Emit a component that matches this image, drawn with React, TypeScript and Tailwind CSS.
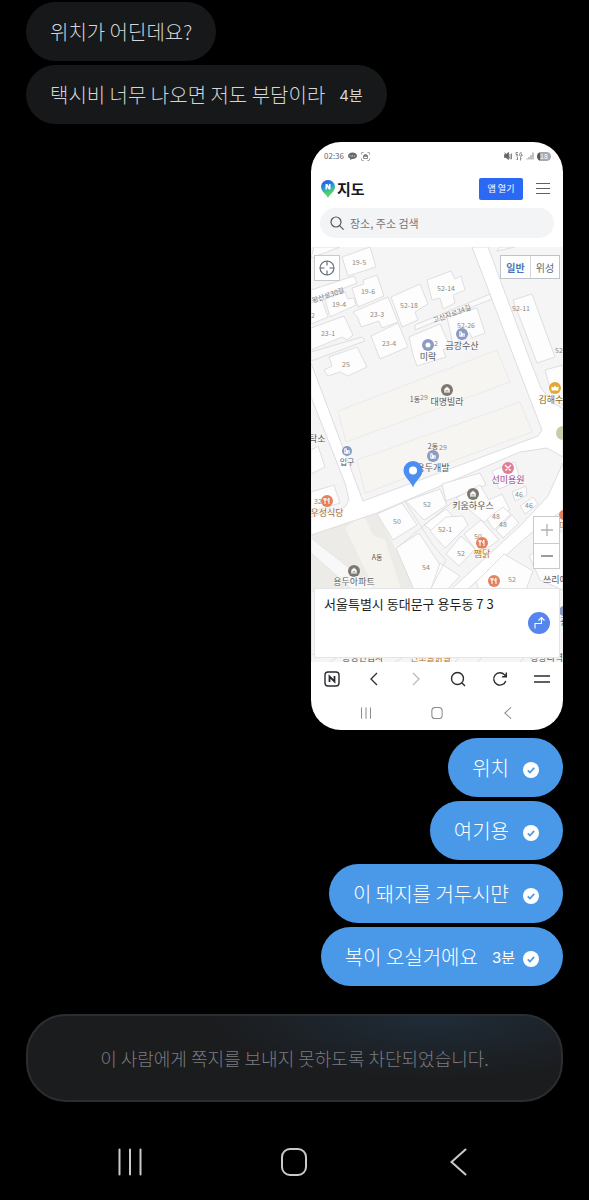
import type { ReactNode } from "react";

type Tone = "plain" | "blue" | "brown" | "orange" | "gold" | "pink";

const toneColor: Record<Tone, string> = {
  plain: "#56575c",
  blue: "#8b9cc4",
  brown: "#7d786f",
  orange: "#e2825f",
  gold: "#e0a834",
  pink: "#df7f93",
};

const buildings = [
  "342,257 370,247 376,267 348,276",
  "311,258 340,247 314,247",
  "352,288 364,284 363,280 377,275 384,296 358,307",
  "325,299 345,292 348,299 354,298 356,305 330,317",
  "311,303 322,300 328,317 311,324",
  "353,312 388,297 398,322 382,328 379,321 361,327 358,318",
  "391,297 420,284 428,304 415,312 418,320 402,327",
  "427,280 451,271 455,279 461,276 465,290 453,295 455,303 443,309 440,298 432,300",
  "311,328 344,316 353,335 347,340 342,337 311,350",
  "371,336 398,323 408,347 380,359",
  "329,357 357,347 367,367 348,376 340,372 328,376 324,370 332,366",
  "409,337 440,324 450,346 443,350 446,357 417,366 413,355",
  "447,317 477,308 485,333 472,338 470,333 453,345",
  "513,300 532,294 555,357 537,363",
  "497,251 515,247 500,247",
  "311,450 318,446 325,467 311,474",
  "492,471 515,462 520,480 499,489",
  "442,484 480,473 486,485 446,501",
  "377,514 402,503 417,525 393,540",
  "406,501 440,489 447,505 424,520",
  "456,498 480,485 489,500 502,494 510,510 484,522 474,514",
  "396,548 419,533 440,565 440,592 415,592",
  "424,525 446,509 458,522 438,535",
  "430,531 446,517 463,516 468,525 445,548",
  "446,554 461,536 475,549 459,566",
  "464,534 481,520 499,540 479,554",
  "487,519 503,507 511,514 494,530",
  "496,530 512,515 519,523 503,538",
  "512,492 526,486 527,495 515,501",
  "520,506 533,497 538,504 525,514",
  "440,563 460,576 445,592 430,592",
  "476,582 504,554 533,571 525,592 480,592",
  "311,492 334,485 340,503 311,512",
  "545,370 563,365 563,405 552,395",
  "529,556 563,530 563,590 540,580",
];

const lots: { x: number; y: number; t: string }[] = [
  { x: 359, y: 265, t: "19-5" },
  { x: 368, y: 294, t: "19-6" },
  { x: 339, y: 307, t: "19-4" },
  { x: 377, y: 317, t: "23-3" },
  { x: 409, y: 308, t: "52-18" },
  { x: 446, y: 291, t: "52-14" },
  { x: 466, y: 328, t: "52-26" },
  { x: 521, y: 311, t: "52-11" },
  { x: 328, y: 336, t: "23-1" },
  { x: 389, y: 346, t: "23-4" },
  { x: 436, y: 346, t: "2" },
  { x: 313, y: 318, t: "2" },
  { x: 346, y: 367, t: "25" },
  { x: 559, y: 353, t: "52" },
  { x: 424, y: 400, t: "29" },
  { x: 443, y: 450, t: "29" },
  { x: 427, y: 507, t: "52" },
  { x: 397, y: 524, t: "50" },
  { x: 445, y: 532, t: "52-1" },
  { x: 519, y: 497, t: "46" },
  { x: 529, y: 508, t: "46" },
  { x: 496, y: 519, t: "48" },
  { x: 503, y: 527, t: "48" },
  { x: 478, y: 539, t: "50" },
  { x: 461, y: 556, t: "52" },
  { x: 426, y: 570, t: "54" },
  { x: 512, y: 582, t: "52" },
  { x: 318, y: 504, t: "32" },
];

const places: { x: number; y: number; ty: number; t: string; tone: Tone; ink: string; r: number; size: number }[] = [
  { x: 428, y: 345, ty: 360, t: "미락", tone: "blue", ink: "#56575c", r: 6, size: 9 },
  { x: 462, y: 334, ty: 349, t: "금강수산", tone: "blue", ink: "#56575c", r: 6, size: 9 },
  { x: 447, y: 390, ty: 405, t: "대명빌라", tone: "brown", ink: "#56575c", r: 6, size: 9 },
  { x: 347, y: 451, ty: 465, t: "입구", tone: "blue", ink: "#566078", r: 5, size: 8 },
  { x: 433, y: 456, ty: 471, t: "용두개발", tone: "blue", ink: "#56575c", r: 6, size: 9 },
  { x: 555, y: 388, ty: 403, t: "김해수산", tone: "gold", ink: "#8b6420", r: 6, size: 9 },
  { x: 508, y: 468, ty: 483, t: "선미용원", tone: "pink", ink: "#a03a88", r: 6, size: 9 },
  { x: 473, y: 494, ty: 509, t: "키움하우스", tone: "brown", ink: "#56575c", r: 6, size: 9 },
  { x: 327, y: 501, ty: 516, t: "우성식당", tone: "orange", ink: "#b06a2c", r: 6, size: 9 },
  { x: 482, y: 543, ty: 557, t: "쨈닭", tone: "orange", ink: "#b87624", r: 6, size: 9 },
  { x: 354, y: 571, ty: 585, t: "용두아파트", tone: "brown", ink: "#626267", r: 6, size: 9 },
  { x: 494, y: 581, ty: 0, t: "", tone: "orange", ink: "", r: 6, size: 9 },
];

function PlaceGlyph({ tone }: { tone: Tone }) {
  if (tone === "orange")
    return <path d="M-2 -3v6M-3 -3v2h2v-2M2 3v-6q-2 1 -1 3h1" stroke="#fff" strokeWidth="1" fill="none" />;
  if (tone === "pink")
    return <path d="M-3 -3 2 2M3 -3 -2 2M-3 2h2M1 2h2" stroke="#fff" strokeWidth="1.2" fill="none" />;
  if (tone === "gold")
    return <path d="M-3.5 2.500v-4l2 1 1.500-2 1.500 2 2-1v4z" fill="#fff" />;
  if (tone === "brown")
    return <path d="M-3 3v-4l3-2.500 3 2.500v4zM-1 3v-2.500h2V3" fill="#fff" stroke="#7d786f" strokeWidth=".6" />;
  return <path d="M-3 3v-6h3v2h3v4zM-1.500 -1.500v3M1.500 .5v2" fill="#fff" stroke="#8b9cc4" strokeWidth=".6" />;
}

function MapDrawing() {
  return (
    <svg
      viewBox="311 247 252 415"
      className="block w-full font-['Noto_Sans_CJK_KR',sans-serif]"
      role="img"
      aria-label="용두동 지도"
    >
      <rect x="311" y="247" width="252" height="415" fill="#f5f5f6" />
      <path d="M311 535 377 513 418 592 311 592z" fill="#ecebe8" />
      <path d="M345 528 363 514 373 535 385 540 402 592 376 592z" fill="#f5f3ed" />
      <path d="M311 538 380 592 355 592 311 553z" fill="#f8f8f9" stroke="#dededf" strokeWidth=".6" />
      <g fill="#f6f5f2" stroke="#e8e7e5" strokeWidth=".8">
        <path d="M338 411 497 350 510 382 346 442z" />
        <path d="M357 460 520 402 532 432 365 493z" />
      </g>
      <g fill="#fff" stroke="#dadadc" strokeWidth=".9" strokeLinejoin="round">
        <path d="M311 290 354 276 357 283 311 301z" />
        <path d="M311 352 362 337 365 341 311 361z" fill="#f8f8f8" />
        <path d="M415 325 490 294 492 299 415 330z" fill="#fafafa" />
        <path d="M472 247 488 247 530 360 541 388 552 402 563 409 563 457 547 448 520 452 377 513 311 535 311 517 345 507 349 500 345 483 311 397 311 363 363 501 412 483 538 436 542 430 515 360z" />
        <path d="M563 463 548 496 520 526 446 594 462 594 530 534 563 510z" />
      </g>
      <circle cx="563" cy="433" r="7" fill="#c3cfab" />
      <g fill="#fdfdfd" stroke="#dbdbde" strokeWidth=".9" strokeLinejoin="round">
        {buildings.map((points) => (
          <polygon key={points} points={points} />
        ))}
      </g>
      <g fill="none" stroke="#dcdcde" strokeWidth=".9">
        <path d="M311 592v70M311 655l14-5M330 662l12-8M395 662l14-8M455 662l8-8M478 662l6-8M520 662l8-8" />
        <path d="M404 500 433 545 446 560 430 590M455 500 398 547" />
      </g>
      <g fontSize="7" fill="#8f8880" textAnchor="middle">
        {lots.map((lot, index) => (
          <text key={index} x={lot.x} y={lot.y}>
            {lot.t}
          </text>
        ))}
      </g>
      <g fontSize="7" fill="#7b7b80">
        <text transform="translate(313 303) rotate(-19)">왕산로30길</text>
        <text transform="translate(434 323) rotate(-20)">고산자로34길</text>
      </g>
      <g fontSize="7" fill="#5f5a55" textAnchor="middle">
        <text x="415" y="402">1동</text>
        <text x="433" y="449">2동</text>
        <text x="377" y="560">A동</text>
      </g>
      <g fontSize="9" fill="#56575c">
        <text x="309" y="442">탁소</text>
        <text x="543" y="583">쓰리에</text>
        <text x="342" y="661">동성연립사</text>
        <text x="410" y="661" fill="#b87624">신초불닭발</text>
        <text x="530" y="661">청량리역</text>
      </g>
      <circle cx="564" cy="515" r="5" fill="#e2825f" />
      <text x="559" y="529" fontSize="9" fill="#b87624">마</text>
      <circle cx="564" cy="611" r="5" fill="#8b9cc4" />
      <text x="560" y="625" fontSize="9" fill="#566078">광</text>
      {places.map((place) => (
        <g key={place.x}>
          <g transform={`translate(${place.x} ${place.y})`}>
            <circle r={place.r} fill={toneColor[place.tone]} />
            {place.t === "미락" ? <circle r="2.500" fill="#fff" /> : <PlaceGlyph tone={place.tone} />}
          </g>
          <text
            x={place.x}
            y={place.ty}
            fontSize={place.size}
            fill={place.ink}
            stroke="#fafafa"
            strokeWidth="1.200"
            paintOrder="stroke"
            textAnchor="middle"
          >
            {place.t}
          </text>
        </g>
      ))}
      <path d="M413 487.500C411 481 403.500 477 403.500 470.500a9.500 9.500 0 0 1 19 0C422.500 477 415 481 413 487.500z" fill="#4b8df0" />
      <circle cx="413" cy="470.500" r="4" fill="#fff" />
    </svg>
  );
}

function StatusBar() {
  return (
    <div className="flex h-7 items-center justify-between pr-3 pl-[13px] text-[#66676b]">
      <div className="flex items-center gap-1">
        <span className="text-[8px]">02:36</span>
        <svg className="h-2 w-[9px]" viewBox="0 0 18 16" fill="currentColor" aria-hidden="true">
          <path d="M9 1c5 0 9 2.700 9 6.500S14 14 9 14H8l-4 2 .5-3C1.500 12 0 10 0 7.500 0 3.700 4 1 9 1z" />
          <path d="M4 6v4M7 10l1.500-4L10 10M13 6v4" stroke="#ddd" strokeWidth="1" fill="none" />
        </svg>
        <svg className="size-[9px]" viewBox="0 0 18 18" fill="none" stroke="currentColor" strokeWidth="1.500" aria-hidden="true">
          <path d="M5 1H3a2 2 0 0 0-2 2v2M13 1h2a2 2 0 0 1 2 2v2M5 17H3a2 2 0 0 1-2-2v-2M13 17h2a2 2 0 0 0 2-2v-2" />
          <path d="M5 7h8v6H5zM5 9h8M7 7V5h4v2" />
        </svg>
      </div>
      <div className="flex items-center gap-[3px]">
        <svg className="size-2" viewBox="0 0 16 16" fill="none" stroke="currentColor" strokeWidth="1.600" aria-hidden="true">
          <path d="M1 5h3l5-4v14l-5-4H1z" fill="currentColor" />
          <path d="M12 4v8M15 3v11M1 1l13 14" />
        </svg>
        <svg className="h-[9px] w-2" viewBox="0 0 16 18" fill="none" stroke="currentColor" strokeWidth="1.500" aria-hidden="true">
          <path d="M6 1H2v4h3q2 1 0 3H2M14 2q-5-2-5 3t5 3V5h-2M5 10v6l-2-2M11 17v-6l2 2" />
        </svg>
        <svg className="size-2" viewBox="0 0 16 16" fill="none" stroke="currentColor" strokeWidth="1.600" aria-hidden="true">
          <path d="M2 15v-2M6 15v-5M10 15V6M14 15V1" />
        </svg>
        <span className="flex h-[9px] w-3.5 items-center justify-center rounded-full bg-linear-to-r from-[#55565a] from-20% to-[#a9a9ac] to-20% text-[7px] text-white">
          18
        </span>
      </div>
    </div>
  );
}

function MapHeader() {
  return (
    <header className="flex h-[38px] items-center pr-3 pl-2.5">
      <svg className="h-[18px] w-[14px]" viewBox="0 0 28 36" aria-hidden="true">
        <defs>
          <linearGradient id="pin" x1="0" y1="0" x2=".3" y2="1">
            <stop offset="0.200" stopColor="#2962e8" />
            <stop offset="0.550" stopColor="#2aa6c8" />
            <stop offset="0.800" stopColor="#4fd06a" />
          </linearGradient>
        </defs>
        <path d="M14 36C12 29 0 24 0 13.500a14 13.500 0 0 1 28 0C28 24 16 29 14 36z" fill="url(#pin)" />
        <path d="M9 19V8h3.500l3.500 5V8h3v11h-3.500L12 14v5z" fill="#fff" />
      </svg>
      <h1 className="ml-0.5 text-[15px] leading-5 font-bold text-[#17181c]">지도</h1>
      <button type="button" className="ml-auto h-[22px] w-11 rounded-xs bg-[#2b68f3] text-[9px] text-white">
        앱 열기
      </button>
      <button type="button" aria-label="메뉴" className="ml-3 text-[#606166]">
        <svg className="h-3.5 w-4" viewBox="0 0 16 14" fill="none" stroke="currentColor" strokeWidth="1.200" aria-hidden="true">
          <path d="M1 1.500h14M1 6.500h14M1 11.500h14" />
        </svg>
      </button>
    </header>
  );
}

function MapCard() {
  return (
    <section className="w-63 max-w-full overflow-hidden rounded-[30px] bg-white">
      <StatusBar />
      <MapHeader />
      <label className="mx-[9px] flex h-[30px] items-center gap-1.5 rounded-full bg-[#f3f4f6] pl-2.5">
        <svg className="size-3.5 shrink-0 text-[#55575c]" viewBox="0 0 14 14" fill="none" stroke="currentColor" strokeWidth="1.200" aria-hidden="true">
          <circle cx="6" cy="6" r="5" />
          <path d="m9.600 9.600 4 4" />
        </svg>
        <input
          type="text"
          aria-label="장소, 주소 검색"
          placeholder="장소, 주소 검색"
          className="w-full min-w-0 bg-transparent text-[11px] text-[#66676c] outline-none placeholder:text-[#74757a]"
        />
      </label>
      <div className="relative mt-[9px]">
        <MapDrawing />
        <button
          type="button"
          aria-label="현재 위치"
          className="absolute top-2 left-[3px] flex size-[26px] items-center justify-center border border-[#c9cacd] bg-white text-[#5b6370]"
        >
          <svg className="size-4" viewBox="0 0 16 16" fill="none" stroke="currentColor" strokeWidth="1.100" aria-hidden="true">
            <circle cx="8" cy="8" r="7" />
            <path d="M8 1v4.500M8 10.500V15M1 8h4.500M10.500 8H15" />
          </svg>
        </button>
        <div className="absolute top-2 right-[3px] grid h-6 w-[60px] grid-cols-2 border border-[#bfc3cc] bg-white text-[10px]">
          <button type="button" className="font-bold text-[#4a76b8]">
            일반
          </button>
          <button type="button" className="border-l border-[#d5d7dc] text-[#66676c]">
            위성
          </button>
        </div>
        <div className="absolute top-[269px] right-[3px] grid h-[53px] w-[27px] grid-rows-2 border border-[#c9cacd] bg-white text-[#7b7c80]">
          <button type="button" aria-label="확대" className="flex items-center justify-center text-[#b0b1b5]">
            <svg className="size-3.5" viewBox="0 0 14 14" stroke="currentColor" strokeWidth="1.300" aria-hidden="true">
              <path d="M1 7h12M7 1v12" />
            </svg>
          </button>
          <button type="button" aria-label="축소" className="flex items-center justify-center border-t border-[#c9cacd]">
            <svg className="size-3.5" viewBox="0 0 14 14" stroke="currentColor" strokeWidth="1.400" aria-hidden="true">
              <path d="M1 7h12" />
            </svg>
          </button>
        </div>
        <div className="absolute right-[3px] bottom-1 left-[3px] flex h-[70px] justify-between border border-[#e4e5e7] bg-white pt-[5px] pr-[9px] pl-[9px]">
          <p className="text-[13px] leading-5 whitespace-nowrap text-[#1d1e20]">서울특별시 동대문구 용두동 7 3</p>
          <button
            type="button"
            aria-label="길찾기"
            className="mt-[18px] -ml-4 flex size-[22px] shrink-0 items-center justify-center rounded-full bg-[#5685ee] text-white"
          >
            <svg className="size-[22px]" viewBox="0 0 22 22" fill="none" stroke="currentColor" strokeWidth="1.100" aria-hidden="true">
              <path d="M7 16.500v-5h6.500V5.500M10.500 8.500l3-3 3 3" />
            </svg>
          </button>
        </div>
      </div>
      <nav aria-label="브라우저" className="grid h-[34px] grid-cols-6 place-items-center text-[#2b2c2f]">
        <IconButton label="네이버 홈">
          <rect x="1" y="1" width="14" height="14" rx="3" strokeWidth="1.400" />
          <path d="M5.500 11V5.500L10.500 10.500V5" strokeWidth="1.800" />
        </IconButton>
        <IconButton label="뒤로">
          <path d="M11 2 5 8l6 6" strokeWidth="1.300" />
        </IconButton>
        <IconButton label="앞으로" faded>
          <path d="m5 2 6 6-6 6" strokeWidth="1.300" />
        </IconButton>
        <IconButton label="검색">
          <circle cx="7.500" cy="7.500" r="6" strokeWidth="1.400" />
          <path d="m12 12 3 3" strokeWidth="1.400" />
        </IconButton>
        <IconButton label="새로고침">
          <path d="M13.800 10A6.200 6.200 0 1 1 12.500 3.700L14 5.500M14.300 1.500v4.200h-4.200" strokeWidth="1.400" />
        </IconButton>
        <IconButton label="브라우저 메뉴">
          <path d="M0 5h16M0 11h16" strokeWidth="1.400" />
        </IconButton>
      </nav>
      <div className="grid h-[34px] grid-cols-3 place-items-center px-5 text-[#8b8c90]">
        <SystemGlyph kind="recent" small />
        <SystemGlyph kind="home" small />
        <SystemGlyph kind="back" small />
      </div>
    </section>
  );
}

function IconButton({ label, faded = false, children }: { label: string; faded?: boolean; children: ReactNode }) {
  return (
    <button type="button" aria-label={label} className={faded ? "text-[#b9babd]" : ""}>
      <svg className="size-4" viewBox="0 0 16 16" fill="none" stroke="currentColor" aria-hidden="true">
        {children}
      </svg>
    </button>
  );
}

function SystemGlyph({ kind, small = false }: { kind: "recent" | "home" | "back"; small?: boolean }) {
  return (
    <svg
      className={small ? "size-3" : "size-7"}
      viewBox="0 0 28 28"
      fill="none"
      stroke="currentColor"
      strokeWidth={small ? 2.4 : 2}
      strokeLinecap="round"
      aria-hidden="true"
    >
      {kind === "recent" && <path d="M3.500 1.500v25M14 1.500v25M24.500 1.500v25" />}
      {kind === "home" && <rect x="2" y="1" width="24" height="26" rx="8" />}
      {kind === "back" && <path d="M20.500 1.500 6.500 14l14 12.500" />}
    </svg>
  );
}

function Sent() {
  return (
    <svg className="mt-[5px] size-4" viewBox="0 0 16 16" role="img" aria-label="보냄">
      <circle cx="8" cy="8" r="8" fill="#fff" />
      <path d="m4.800 8.300 2.200 2.200 4.200-4.600" fill="none" stroke="#4a99e9" strokeWidth="1.700" />
    </svg>
  );
}

function Received({ text, time }: { text: string; time?: string }) {
  return (
    <li className="flex h-[59px] max-w-full items-center gap-3.5 self-start rounded-full bg-[#16181a] px-6 text-[#d4d5d6]">
      <span className="text-[20px] font-light">{text}</span>
      {time && (
        <time className="mt-1 font-['Inter','Noto_Sans_CJK_KR',sans-serif] text-[15px]">{time}</time>
      )}
    </li>
  );
}

function Mine({ text, time }: { text: string; time?: string }) {
  return (
    <li className="flex h-[59px] max-w-full items-center self-end rounded-full bg-[#4a99e9] px-6 text-white">
      <span className="text-[20px] font-light">{text}</span>
      {time && (
        <time className="mt-1 ml-3.5 font-['Inter','Noto_Sans_CJK_KR',sans-serif] text-[15px]">{time}</time>
      )}
      <span className={time ? "ml-2" : "ml-3.5"}>
        <Sent />
      </span>
    </li>
  );
}

export default function App() {
  return (
    <main className="flex min-h-screen flex-col bg-black px-[26px] pt-0.5 font-['Noto_Sans_CJK_KR',sans-serif]">
      <ul className="flex flex-col gap-1">
        <Received text="위치가 어딘데요?" />
        <Received text="택시비 너무 나오면 저도 부담이라" time="4분" />
        <li className="mt-3.5 mb-1 max-w-full self-end">
          <MapCard />
        </li>
        <Mine text="위치" />
        <Mine text="여기용" />
        <Mine text="이 돼지를 거두시먄" />
        <Mine text="복이 오실거에요" time="3분" />
      </ul>
      <p className="mt-7 flex h-[88px] items-center justify-center rounded-[40px] border-2 border-[#2b2e30] bg-[#1b1c1e] bg-[radial-gradient(ellipse_42%_75%_at_76%_0%,#1f2c38,#1b1c1e)] px-6 text-center text-[18px] font-light text-[#7b7d80]">
        이 사람에게 쪽지를 보내지 못하도록 차단되었습니다.
      </p>
      <nav aria-label="시스템" className="mt-[46px] grid grid-cols-3 place-items-center px-[22px] pb-6 text-[#c9cacb]">
        <button type="button" aria-label="최근 앱">
          <SystemGlyph kind="recent" />
        </button>
        <button type="button" aria-label="홈">
          <SystemGlyph kind="home" />
        </button>
        <button type="button" aria-label="뒤로 가기">
          <SystemGlyph kind="back" />
        </button>
      </nav>
    </main>
  );
}
